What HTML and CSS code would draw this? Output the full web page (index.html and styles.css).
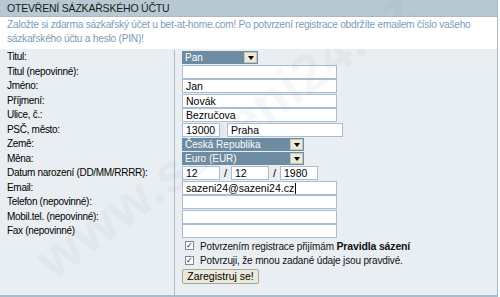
FILE: index.html
```html
<!DOCTYPE html>
<html lang="cs">
<head>
<meta charset="utf-8">
<link rel="stylesheet" href="styles.css">
</head>
<body>
<div class="panel">
  <div class="hd">OTEVŘENÍ SÁZKAŘSKÉHO ÚČTU</div>
  <div class="intro">Založte si zdarma sázkařský účet u bet-at-home.com! Po potvrzení registrace obdržíte emailem číslo vašeho sázkařského účtu a heslo (PIN)!</div>
  <div class="form">
    <div class="lab">Titul:</div>
    <div class="fld"><div class="sel s-title"><span>Pan</span><i class="arr"></i></div></div>
    <div class="lab">Titul (nepovinné):</div>
    <div class="fld"><div class="inp w-full"></div></div>
    <div class="lab">Jméno:</div>
    <div class="fld"><div class="inp w-full">Jan</div></div>
    <div class="lab">Příjmení:</div>
    <div class="fld"><div class="inp w-full">Novák</div></div>
    <div class="lab">Ulice, č.:</div>
    <div class="fld"><div class="inp w-full">Bezručova</div></div>
    <div class="lab">PSČ, město:</div>
    <div class="fld"><div class="inp w-zip">13000</div><div class="inp w-city">Praha</div></div>
    <div class="lab">Země:</div>
    <div class="fld"><div class="sel s-wide"><span>Česká Republika</span><i class="arr"></i></div></div>
    <div class="lab">Měna:</div>
    <div class="fld"><div class="sel s-wide"><span>Euro (EUR)</span><i class="arr"></i></div></div>
    <div class="lab">Datum narození (DD/MM/RRRR):</div>
    <div class="fld"><div class="inp w-d">12</div><span class="sl">/</span><div class="inp w-d">12</div><span class="sl">/</span><div class="inp w-d">1980</div></div>
    <div class="lab">Email:</div>
    <div class="fld"><div class="inp w-full big">sazeni24@sazeni24.cz<span class="caret"></span></div></div>
    <div class="lab">Telefon (nepovinné):</div>
    <div class="fld"><div class="inp w-full"></div></div>
    <div class="lab">Mobil.tel. (nepovinné):</div>
    <div class="fld"><div class="inp w-full"></div></div>
    <div class="lab">Fax (nepovinné)</div>
    <div class="fld"><div class="inp w-full"></div></div>
    <div class="lab"></div>
    <div class="fld chk"><span class="cb">✓</span><span>Potvrzením registrace přijímám <b>Pravidla sázení</b></span></div>
    <div class="lab"></div>
    <div class="fld chk"><span class="cb">✓</span><span>Potvrzuji, že mnou zadané údaje jsou pravdivé.</span></div>
    <div class="lab tall"></div>
    <div class="fld tall"><button class="btn">Zaregistruj se!</button></div>
  </div>
  <div class="wm">www.sazeni24.cz</div>
</div>
</body>
</html>
```
FILE: styles.css
```css
html, body { margin: 0; padding: 0; }
body {
  width: 500px; height: 297px; overflow: hidden;
  font-family: "Liberation Sans", Arial, sans-serif;
  font-size: 10px; color: #000; background: #fff;
}
.panel {
  position: relative;
  width: 497px; height: 295px;
  border-right: 1px solid #a9bccb;
  border-bottom: 2px solid #a9bccb;
  background: #e9eef2;
  overflow: hidden;
}
.hd {
  height: 16px; line-height: 17px;
  background: #b7c8d3;
  padding-left: 7px;
  font-size: 10.5px; color: #1a1a1a;
  letter-spacing: -0.2px;
  border-bottom: 1px solid #a7bac6;
}
.intro {
  position: relative; z-index: 1;
  background: #fff;
  color: #7d9cb4;
  padding: 1px 4px 3px 7px;
  line-height: 14px;
  height: 28px;
  font-size: 10.2px;
  letter-spacing: -0.25px;
}
.form {
  display: grid;
  grid-template-columns: 175px 1fr;
  grid-auto-rows: 14.5px;
  padding-top: 1px;
}
.lab {
  border-right: 1px solid #a9bccb;
  padding-left: 7px;
  line-height: 14.5px;
  white-space: nowrap;
  font-size: 10px;
  letter-spacing: -0.3px;
}
.lab.tall, .fld.tall { height: 30px; }
.fld {
  padding-left: 7px;
  display: flex; align-items: center;
}
.inp {
  box-sizing: border-box;
  height: 14px;
  background: #fff;
  border: 1px solid #a8bed0;
  line-height: 12px;
  padding-left: 3px;
  font-size: 10.5px;
  color: #000;
  white-space: nowrap;
  overflow: hidden;
}
.w-full { width: 155px; }
.w-zip { width: 38px; }
.w-city { width: 116px; margin-left: 7px; }
.w-d { width: 38px; }
.sl { width: 11px; text-align: center; font-size: 11px; }
.caret { display: inline-block; width: 1px; height: 11px; background: #000; vertical-align: -2px; margin-left: 1px; }
.sel {
  box-sizing: border-box;
  height: 13px;
  background: #6d8ca2;
  color: #fff;
  display: flex; align-items: center; justify-content: space-between;
  padding-left: 3px;
  font-size: 10px;
}
.s-title { width: 76px; }
.s-wide { width: 122px; }
.arr {
  box-sizing: border-box;
  width: 13px; height: 11px; margin-right: 1px;
  background: #ece9d8;
  border: 1px solid #c9c6b6;
  position: relative;
}
.arr::after {
  content: ""; position: absolute; left: 3px; top: 3px;
  border-left: 3px solid transparent; border-right: 3px solid transparent;
  border-top: 4px solid #000;
}
.chk { font-size: 10px; color: #111; padding-left: 10px; white-space: nowrap; letter-spacing: -0.15px; }
.chk b { font-size: 10.5px; }
.cb {
  box-sizing: border-box;
  flex: none;
  width: 9px; height: 9px;
  border: 1px solid #7a8a98;
  background: #fff;
  font-size: 8px; line-height: 7px; text-align: center;
  margin-right: 6px;
}
.fld.tall { align-items: flex-start; padding-top: 1px; }
.btn {
  margin: 0;
  font-family: "Liberation Sans", Arial, sans-serif;
  font-size: 10.5px;
  height: 15px; padding: 0 2px; line-height: 13px;
  background: #ece9d8;
  border: 1px solid #aaa69a;
  border-radius: 2px;
  color: #000;
  width: 77px;
  white-space: nowrap;
}
.wm {
  position: absolute;
  left: 60px; top: 230px;
  font-size: 54px; font-weight: bold;
  line-height: 60px;
  color: rgba(130,140,150,0.07);
  transform: rotate(-36deg);
  transform-origin: 0 100%;
  white-space: nowrap;
  pointer-events: none;
  letter-spacing: 1px;
}
```
